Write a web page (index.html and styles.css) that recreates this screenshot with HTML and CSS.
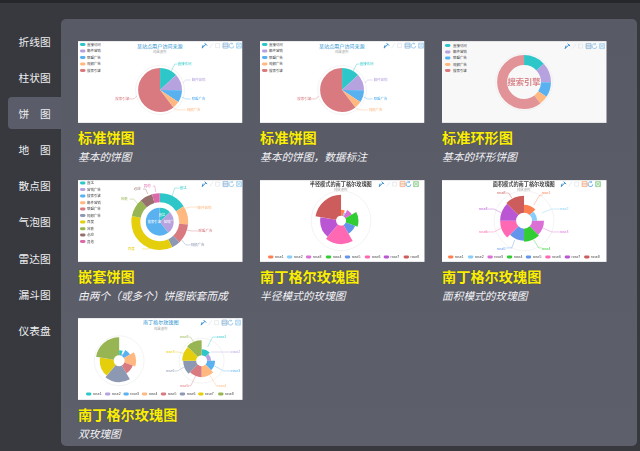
FILE: index.html
```html
<!DOCTYPE html>
<html lang="zh">
<head>
<meta charset="utf-8">
<title>ECharts 图表示例</title>
<link rel="stylesheet" href="styles.css">
</head>
<body>
<svg class="defs" width="0" height="0" aria-hidden="true">
  <defs>
    <symbol id="tools" viewBox="0 0 42 6" overflow="visible">
      <g class="tool">
        <path class="t-a" d="M.5 5.500 4.500 1.500M3 .5l2.500 2.500M.5 5.500l1-3"/>
        <path class="t-f" d="M8 5.500l3.500-5"/>
        <path class="t-f" d="M14 1h4v4h-4z"/>
        <path class="t-b" d="M21.500.5h5v5h-5zM21.500 2.200h5M21.500 3.800h5"/>
        <path class="t-c" d="M31 1a2.400 2.400 0 1 0 1.300 2.200M30.300 0l1 1-1.200.8"/>
        <path class="t-d" d="M35 .5h5v5h-5zM36.200.5v1.800h2.600V.5M36.200 5.500V3.500h2.600v2"/>
      </g>
    </symbol>
    <symbol id="tools-x" viewBox="0 0 42 6" overflow="visible">
      <g class="tool">
        <path class="t-a" d="M.5 5.500 4.500 1.500M3 .5l2.500 2.500M.5 5.500l1-3"/>
        <path class="t-f" d="M8 5.500l3.500-5"/>
        <path class="t-f" d="M14 1h4v4h-4z"/>
        <path class="t-o" d="M21.500.5h5v5h-5zM21.500 2.200h5M21.500 3.800h5"/>
        <path class="t-h" d="M31 1a2.400 2.400 0 1 0 1.300 2.200M30.300 0l1 1-1.200.8"/>
        <path class="t-g" d="M35 .5h5v5h-5zM36.200.5v1.800h2.600V.5M36.200 5.500V3.500h2.600v2"/>
      </g>
    </symbol>
    <symbol id="pie-basic" viewBox="0 0 165 82">
      <rect class="bg" width="165" height="82"/>
      <g class="lg">
        <rect class="f1" x="2" y="2" width="5.500" height="3" rx="1.500"/><text x="9" y="4.700">直接访问</text>
        <rect class="f2" x="2" y="8.500" width="5.500" height="3" rx="1.500"/><text x="9" y="11.200">邮件营销</text>
        <rect class="f3" x="2" y="15" width="5.500" height="3" rx="1.500"/><text x="9" y="17.700">联盟广告</text>
        <rect class="f4" x="2" y="21.500" width="5.500" height="3" rx="1.500"/><text x="9" y="24.200">视频广告</text>
        <rect class="f5" x="2" y="28" width="5.500" height="3" rx="1.500"/><text x="9" y="30.700">搜索引擎</text>
      </g>
      <text class="ttl" x="82" y="6.800">某站点用户访问来源</text>
      <text class="sub" x="82" y="11.500">纯属虚构</text>
      <circle class="halo" cx="82.300" cy="49" r="24.500"/>
      <g transform="translate(82.300 49) rotate(-90)">
        <circle class="s s1" r="11" stroke-width="22" pathLength="360" stroke-dasharray="47 360"/>
        <circle class="s s2" r="11" stroke-width="22" pathLength="360" stroke-dasharray="43.600 360" stroke-dashoffset="-47"/>
        <circle class="s s3" r="11" stroke-width="22" pathLength="360" stroke-dasharray="32.900 360" stroke-dashoffset="-90.600"/>
        <circle class="s s4" r="11" stroke-width="22" pathLength="360" stroke-dasharray="19 360" stroke-dashoffset="-123.500"/>
        <circle class="s s5" r="11" stroke-width="22" pathLength="360" stroke-dasharray="217.500 360" stroke-dashoffset="-142.500"/>
      </g>
      <path class="l1" d="M93 31l4-8h3"/>
      <path class="l2" d="M105 42l3-3h5"/>
      <path class="l3" d="M104 56l4 2h5"/>
      <path class="l4" d="M96 67l3 2h9"/>
      <path class="l5" d="M59 55l-3 3h-5"/>
      <g class="lb">
        <text class="x1" x="100" y="24">直接访问</text>
        <text class="x2" x="114" y="40">邮件营销</text>
        <text class="x3" x="114" y="59">联盟广告</text>
        <text class="x4" x="109" y="70">视频广告</text>
        <text class="x5" x="37.500" y="59.500">搜索引擎</text>
      </g>
      <use href="#tools" x="124" y="1.500" width="42" height="6"/>
    </symbol>
  </defs>
</svg>

<nav class="side">
  <a class="item">折线图</a>
  <a class="item">柱状图</a>
  <a class="item on">饼　图</a>
  <a class="item">地　图</a>
  <a class="item">散点图</a>
  <a class="item">气泡图</a>
  <a class="item">雷达图</a>
  <a class="item">漏斗图</a>
  <a class="item">仪表盘</a>
</nav>

<main class="panel">
  <article class="card">
    <svg class="chart" viewBox="0 0 165 82"><use href="#pie-basic" width="165" height="82"/></svg>
    <h2>标准饼图</h2>
    <p>基本的饼图</p>
  </article>

  <article class="card">
    <svg class="chart" viewBox="0 0 165 82"><use href="#pie-basic" width="165" height="82"/></svg>
    <h2>标准饼图</h2>
    <p>基本的饼图，数据标注</p>
  </article>

  <article class="card">
    <svg class="chart" viewBox="0 0 165 82">
      <rect class="bg-g" width="165" height="82"/>
      <g class="lg">
        <rect class="f1" x="3" y="3" width="5.500" height="3" rx="1.500"/><text x="11" y="5.700">直接访问</text>
        <rect class="f2" x="3" y="9.500" width="5.500" height="3" rx="1.500"/><text x="11" y="12.200">邮件营销</text>
        <rect class="f3" x="3" y="15.500" width="5.500" height="3" rx="1.500"/><text x="11" y="18.200">联盟广告</text>
        <rect class="f4" x="3" y="22" width="5.500" height="3" rx="1.500"/><text x="11" y="24.700">视频广告</text>
        <rect class="f5" x="3" y="28" width="5.500" height="3" rx="1.500"/><text x="11" y="30.700">搜索引擎</text>
      </g>
      <circle class="halo" cx="82.300" cy="41" r="28.500"/>
      <g transform="translate(82.300 41) rotate(-90)">
        <circle class="s s1" r="22" stroke-width="10" pathLength="360" stroke-dasharray="47 360"/>
        <circle class="s s2" r="22" stroke-width="10" pathLength="360" stroke-dasharray="43.600 360" stroke-dashoffset="-47"/>
        <circle class="s s3" r="22" stroke-width="10" pathLength="360" stroke-dasharray="32.900 360" stroke-dashoffset="-90.600"/>
        <circle class="s s4" r="22" stroke-width="10" pathLength="360" stroke-dasharray="19 360" stroke-dashoffset="-123.500"/>
        <circle class="s s5b" r="22" stroke-width="10" pathLength="360" stroke-dasharray="217.500 360" stroke-dashoffset="-142.500"/>
      </g>
      <text class="center" x="82.300" y="44">搜索引擎</text>
      <use href="#tools" x="123" y="2" width="42" height="6"/>
    </svg>
    <h2>标准环形图</h2>
    <p>基本的环形饼图</p>
  </article>

  <article class="card">
    <svg class="chart" viewBox="0 0 165 82">
      <rect class="bg" width="165" height="82"/>
      <g class="lg">
        <rect class="f1" x="2" y="1.300" width="5.500" height="3" rx="1.500"/><text x="9" y="4">直达</text>
        <rect class="f2" x="2" y="7.800" width="5.500" height="3" rx="1.500"/><text x="9" y="10.500">营销广告</text>
        <rect class="f3" x="2" y="14.500" width="5.500" height="3" rx="1.500"/><text x="9" y="17.200">搜索引擎</text>
        <rect class="f4" x="2" y="21.200" width="5.500" height="3" rx="1.500"/><text x="9" y="23.900">邮件营销</text>
        <rect class="f5" x="2" y="27.500" width="5.500" height="3" rx="1.500"/><text x="9" y="30.200">联盟广告</text>
        <rect class="f6" x="2" y="34" width="5.500" height="3" rx="1.500"/><text x="9" y="36.700">视频广告</text>
        <rect class="f7" x="2" y="40.500" width="5.500" height="3" rx="1.500"/><text x="9" y="43.200">百度</text>
        <rect class="f8" x="2" y="47.200" width="5.500" height="3" rx="1.500"/><text x="9" y="49.900">谷歌</text>
        <rect class="f9" x="2" y="53.500" width="5.500" height="3" rx="1.500"/><text x="9" y="56.200">必应</text>
        <rect class="f10" x="2" y="60" width="5.500" height="3" rx="1.500"/><text x="9" y="62.700">其他</text>
      </g>
      <g transform="translate(82 41.700) rotate(-90)">
        <circle class="s s1" r="7" stroke-width="14" pathLength="360" stroke-dasharray="47 360"/>
        <circle class="s s2" r="7" stroke-width="14" pathLength="360" stroke-dasharray="95.500 360" stroke-dashoffset="-47"/>
        <circle class="s s3" r="7" stroke-width="14" pathLength="360" stroke-dasharray="217.500 360" stroke-dashoffset="-142.500"/>
        <circle class="s s1" r="24" stroke-width="9" pathLength="360" stroke-dasharray="57 360"/>
        <circle class="s s4" r="24" stroke-width="9" pathLength="360" stroke-dasharray="39 360" stroke-dashoffset="-57"/>
        <circle class="s s5" r="24" stroke-width="9" pathLength="360" stroke-dasharray="40 360" stroke-dashoffset="-96"/>
        <circle class="s s6" r="24" stroke-width="9" pathLength="360" stroke-dasharray="18 360" stroke-dashoffset="-136"/>
        <circle class="s s7" r="24" stroke-width="9" pathLength="360" stroke-dasharray="128 360" stroke-dashoffset="-154"/>
        <circle class="s s8" r="24" stroke-width="9" pathLength="360" stroke-dasharray="36 360" stroke-dashoffset="-282"/>
        <circle class="s s9" r="24" stroke-width="9" pathLength="360" stroke-dasharray="26 360" stroke-dashoffset="-318"/>
        <circle class="s s10" r="24" stroke-width="9" pathLength="360" stroke-dasharray="16 360" stroke-dashoffset="-344"/>
      </g>
      <g class="in">
        <text x="81" y="36.500">直达</text>
        <text x="86" y="43">营销广告</text>
        <text x="70" y="43">搜索引擎</text>
      </g>
      <path class="l1" d="M94 17l3-9h5"/>
      <path class="l4" d="M108 28l5-1h7"/>
      <path class="l5" d="M109 50l5 1h7"/>
      <path class="l6" d="M104 60l4 5h5"/>
      <path class="l7" d="M74 68l-3 1h-7"/>
      <path class="l8" d="M60 24l-4-5h-4"/>
      <path class="l9" d="M70 14l-2-5h-3"/>
      <path class="l10" d="M78 12l-1-6h-2"/>
      <g class="lb">
        <text class="x1" x="102" y="9">直达</text>
        <text class="x4" x="120" y="28.500">邮件营销</text>
        <text class="x5" x="121" y="52">联盟广告</text>
        <text class="x6" x="113" y="66">视频广告</text>
        <text class="x7" x="50" y="70">百度</text>
        <text class="x8" x="43" y="20">谷歌</text>
        <text class="x9" x="56" y="10">必应</text>
        <text class="x10" x="66" y="7">其他</text>
      </g>
      <use href="#tools" x="124" y="1" width="42" height="6"/>
    </svg>
    <h2>嵌套饼图</h2>
    <p>由两个（或多个）饼图嵌套而成</p>
  </article>

  <article class="card">
    <svg class="chart" viewBox="0 0 165 82">
      <rect class="bg" width="165" height="82"/>
      <text class="ttl-k" x="81" y="5.500">半径模式的南丁格尔玫瑰图</text>
      <text class="sub" x="81" y="11">纯属虚构</text>
      <circle class="halo" cx="81.300" cy="40.700" r="30"/>
      <g transform="translate(81.300 40.700) rotate(-90)">
        <circle class="s k1" r="8" stroke-width="6" pathLength="360" stroke-dasharray="20 360"/>
        <circle class="s k2" r="6.750" stroke-width="3.500" pathLength="360" stroke-dasharray="10 360" stroke-dashoffset="-20"/>
        <circle class="s k3" r="8.750" stroke-width="7.500" pathLength="360" stroke-dasharray="30 360" stroke-dashoffset="-30"/>
        <circle class="s k4" r="11.250" stroke-width="12.500" pathLength="360" stroke-dasharray="50 360" stroke-dashoffset="-60"/>
        <circle class="s k5" r="10" stroke-width="10" pathLength="360" stroke-dasharray="40 360" stroke-dashoffset="-110"/>
        <circle class="s k6" r="14.250" stroke-width="18.500" pathLength="360" stroke-dasharray="70 360" stroke-dashoffset="-150"/>
        <circle class="s k7" r="13" stroke-width="16" pathLength="360" stroke-dasharray="60 360" stroke-dashoffset="-220"/>
        <circle class="s k8" r="15.500" stroke-width="21" pathLength="360" stroke-dasharray="80 360" stroke-dashoffset="-280"/>
      </g>
      <g class="lg">
        <rect class="p1" x="8" y="75.500" width="5.500" height="3" rx="1.500"/><text x="15" y="78.200">rose1</text>
        <rect class="p2" x="27" y="75.500" width="5.500" height="3" rx="1.500"/><text x="34" y="78.200">rose2</text>
        <rect class="p3" x="46" y="75.500" width="5.500" height="3" rx="1.500"/><text x="53" y="78.200">rose3</text>
        <rect class="p4" x="66" y="75.500" width="5.500" height="3" rx="1.500"/><text x="73" y="78.200">rose4</text>
        <rect class="p5" x="85" y="75.500" width="5.500" height="3" rx="1.500"/><text x="92" y="78.200">rose5</text>
        <rect class="p6" x="105" y="75.500" width="5.500" height="3" rx="1.500"/><text x="112" y="78.200">rose6</text>
        <rect class="p7" x="124" y="75.500" width="5.500" height="3" rx="1.500"/><text x="131" y="78.200">rose7</text>
        <rect class="p8" x="144" y="75.500" width="5.500" height="3" rx="1.500"/><text x="151" y="78.200">rose8</text>
      </g>
      <use href="#tools-x" x="119" y="1" width="42" height="6"/>
    </svg>
    <h2>南丁格尔玫瑰图</h2>
    <p>半径模式的玫瑰图</p>
  </article>

  <article class="card">
    <svg class="chart" viewBox="0 0 165 82">
      <rect class="bg" width="165" height="82"/>
      <text class="ttl-k" x="82" y="5.500">面积模式的南丁格尔玫瑰图</text>
      <text class="sub" x="82" y="11">纯属虚构</text>
      <circle class="halo" cx="82.300" cy="40.700" r="30"/>
      <g transform="translate(82.300 40.700) rotate(-90)">
        <circle class="s k1" r="12" stroke-width="8" pathLength="360" stroke-dasharray="45 360"/>
        <circle class="s k2" r="10.500" stroke-width="5" pathLength="360" stroke-dasharray="45 360" stroke-dashoffset="-45"/>
        <circle class="s k3" r="14" stroke-width="12" pathLength="360" stroke-dasharray="45 360" stroke-dashoffset="-90"/>
        <circle class="s k4" r="14.500" stroke-width="13" pathLength="360" stroke-dasharray="45 360" stroke-dashoffset="-135"/>
        <circle class="s k5" r="14" stroke-width="12" pathLength="360" stroke-dasharray="45 360" stroke-dashoffset="-180"/>
        <circle class="s k6" r="16" stroke-width="16" pathLength="360" stroke-dasharray="45 360" stroke-dashoffset="-225"/>
        <circle class="s k7" r="16" stroke-width="16" pathLength="360" stroke-dasharray="45 360" stroke-dashoffset="-270"/>
        <circle class="s k8" r="16.500" stroke-width="17" pathLength="360" stroke-dasharray="45 360" stroke-dashoffset="-315"/>
      </g>
      <path class="n1" d="M92 25l6-10h3"/>
      <path class="n2" d="M100 33l10-4h8"/>
      <path class="n3" d="M101 48l9 4h8"/>
      <path class="n4" d="M92 60l5 8h3"/>
      <path class="n5" d="M73 60l-3 8h-6"/>
      <path class="n6" d="M60 48l-8 4h-8"/>
      <path class="n7" d="M60 33l-8-4h-8"/>
      <path class="n8" d="M70 18l-3-5h-3"/>
      <g class="lb">
        <text class="y1" x="100" y="14">rose1</text>
        <text class="y2" x="118" y="30">rose2</text>
        <text class="y3" x="118" y="53">rose3</text>
        <text class="y4" x="100" y="70">rose4</text>
        <text class="y5" x="55" y="70">rose5</text>
        <text class="y6" x="37" y="53">rose6</text>
        <text class="y7" x="37" y="30">rose7</text>
        <text class="y8" x="55" y="14">rose8</text>
      </g>
      <g class="lg">
        <rect class="p1" x="6" y="75.500" width="5.500" height="3" rx="1.500"/><text x="13" y="78.200">rose1</text>
        <rect class="p2" x="26" y="75.500" width="5.500" height="3" rx="1.500"/><text x="33" y="78.200">rose2</text>
        <rect class="p3" x="45.500" y="75.500" width="5.500" height="3" rx="1.500"/><text x="52.500" y="78.200">rose3</text>
        <rect class="p4" x="65" y="75.500" width="5.500" height="3" rx="1.500"/><text x="72" y="78.200">rose4</text>
        <rect class="p5" x="84" y="75.500" width="5.500" height="3" rx="1.500"/><text x="91" y="78.200">rose5</text>
        <rect class="p6" x="103.500" y="75.500" width="5.500" height="3" rx="1.500"/><text x="110.500" y="78.200">rose6</text>
        <rect class="p7" x="123" y="75.500" width="5.500" height="3" rx="1.500"/><text x="130" y="78.200">rose7</text>
        <rect class="p8" x="142.500" y="75.500" width="5.500" height="3" rx="1.500"/><text x="149.500" y="78.200">rose8</text>
      </g>
      <use href="#tools-x" x="119" y="1" width="42" height="6"/>
    </svg>
    <h2>南丁格尔玫瑰图</h2>
    <p>面积模式的玫瑰图</p>
  </article>

  <article class="card">
    <svg class="chart" viewBox="0 0 165 82">
      <rect class="bg" width="165" height="82"/>
      <text class="ttl" x="83" y="6">南丁格尔玫瑰图</text>
      <text class="sub" x="83" y="11.500">纯属虚构</text>
      <circle class="halo" cx="41.300" cy="42.700" r="25"/>
      <g transform="translate(41.300 42.700) rotate(-90)">
        <circle class="s s1" r="8" stroke-width="5" pathLength="360" stroke-dasharray="20 360"/>
        <circle class="s s2" r="6.500" stroke-width="2" pathLength="360" stroke-dasharray="10 360" stroke-dashoffset="-20"/>
        <circle class="s s3" r="9" stroke-width="7" pathLength="360" stroke-dasharray="30 360" stroke-dashoffset="-30"/>
        <circle class="s s4" r="11.250" stroke-width="11.500" pathLength="360" stroke-dasharray="50 360" stroke-dashoffset="-60"/>
        <circle class="s s5" r="10" stroke-width="9" pathLength="360" stroke-dasharray="40 360" stroke-dashoffset="-110"/>
        <circle class="s s6" r="13.500" stroke-width="16" pathLength="360" stroke-dasharray="70 360" stroke-dashoffset="-150"/>
        <circle class="s s7" r="12.500" stroke-width="14" pathLength="360" stroke-dasharray="60 360" stroke-dashoffset="-220"/>
        <circle class="s s8" r="14.500" stroke-width="18" pathLength="360" stroke-dasharray="80 360" stroke-dashoffset="-280"/>
      </g>
      <circle class="halo" cx="124" cy="42.700" r="22.500"/>
      <g transform="translate(124 42.700) rotate(-90)">
        <circle class="s s1" r="8.500" stroke-width="6" pathLength="360" stroke-dasharray="45 360"/>
        <circle class="s s2" r="7.500" stroke-width="4" pathLength="360" stroke-dasharray="45 360" stroke-dashoffset="-45"/>
        <circle class="s s3" r="9.500" stroke-width="8" pathLength="360" stroke-dasharray="45 360" stroke-dashoffset="-90"/>
        <circle class="s s4" r="11" stroke-width="11" pathLength="360" stroke-dasharray="45 360" stroke-dashoffset="-135"/>
        <circle class="s s5" r="11" stroke-width="11" pathLength="360" stroke-dasharray="45 360" stroke-dashoffset="-180"/>
        <circle class="s s6" r="12" stroke-width="13" pathLength="360" stroke-dasharray="45 360" stroke-dashoffset="-225"/>
        <circle class="s s7" r="12.500" stroke-width="14" pathLength="360" stroke-dasharray="45 360" stroke-dashoffset="-270"/>
        <circle class="s s8" r="13" stroke-width="15" pathLength="360" stroke-dasharray="45 360" stroke-dashoffset="-315"/>
      </g>
      <path class="l1" d="M130 29l5-10h6"/>
      <path class="l2" d="M133 34l13 0h9"/>
      <path class="l3" d="M137 48l9 5h9"/>
      <path class="l4" d="M132 57l7 11h2"/>
      <path class="l5" d="M118 58l-5 10h-3"/>
      <path class="l6" d="M108 48l-8 5h-3"/>
      <path class="l7" d="M108 36l-7-2h-5"/>
      <path class="l8" d="M116 24l-3-5h-2"/>
      <g class="lb">
        <text class="x1" x="140" y="20">rose1</text>
        <text class="x2" x="154" y="35">rose2</text>
        <text class="x3" x="154" y="54">rose3</text>
        <text class="x4" x="140" y="69">rose4</text>
        <text class="x5" x="102" y="69">rose5</text>
        <text class="x6" x="88" y="54">rose6</text>
        <text class="x7" x="88" y="35">rose7</text>
        <text class="x8" x="102" y="20">rose8</text>
      </g>
      <g class="lg">
        <rect class="f1" x="8" y="74.500" width="5.500" height="3" rx="1.500"/><text x="15" y="77.200">rose1</text>
        <rect class="f2" x="27" y="74.500" width="5.500" height="3" rx="1.500"/><text x="34" y="77.200">rose2</text>
        <rect class="f3" x="45.500" y="74.500" width="5.500" height="3" rx="1.500"/><text x="52.500" y="77.200">rose3</text>
        <rect class="f4" x="64" y="74.500" width="5.500" height="3" rx="1.500"/><text x="71" y="77.200">rose4</text>
        <rect class="f5" x="83" y="74.500" width="5.500" height="3" rx="1.500"/><text x="90" y="77.200">rose5</text>
        <rect class="f6" x="102" y="74.500" width="5.500" height="3" rx="1.500"/><text x="109" y="77.200">rose6</text>
        <rect class="f7" x="120.500" y="74.500" width="5.500" height="3" rx="1.500"/><text x="127.500" y="77.200">rose7</text>
        <rect class="f8" x="140.500" y="74.500" width="5.500" height="3" rx="1.500"/><text x="147.500" y="77.200">rose8</text>
      </g>
      <use href="#tools" x="123" y="1.500" width="42" height="6"/>
    </svg>
    <h2>南丁格尔玫瑰图</h2>
    <p>双玫瑰图</p>
  </article>
</main>
</body>
</html>
```

FILE: styles.css
```css
* { box-sizing: border-box; }

html, body { height: 100%; }

body {
  margin: 0;
  height: 451px;
  overflow: hidden;
  display: flex;
  align-items: flex-start;
  background: #37393f;
  border-top: 3px solid #25272b;
  font-family: "Liberation Sans", "Noto Sans CJK SC", sans-serif;
}

.defs { position: absolute; }

.side {
  width: 61px;
  flex: none;
  padding: 22px 0 0 8px;
  display: flex;
  flex-direction: column;
  gap: 4.2px;
}

.item {
  display: flex;
  align-items: center;
  height: 32px;
  padding-left: 10.500px;
  font-size: 10.700px;
  color: #eeeef0;
  border-radius: 4px 0 0 4px;
}

.item.on { background: #5a5c69; }

.panel {
  width: 575.500px;
  height: 427px;
  margin-top: 16px;
  padding: 22px 0 0 17px;
  background: linear-gradient(#585a66, #5d5f6b);
  border-radius: 5px;
  display: grid;
  grid-template-columns: repeat(3, 164.500px);
  column-gap: 17.500px;
  row-gap: 15.600px;
  align-content: start;
}

.card { min-width: 0; }

.chart {
  display: block;
  width: 164.500px;
  height: 82px;
  filter: blur(.4px);
}

.card h2 {
  margin: 5px 0 0;
  font-size: 14.200px;
  line-height: 20px;
  font-weight: bold;
  color: #fbee06;
  text-shadow: 0 0 1px rgba(40, 40, 20, .5);
}

.card p {
  margin: 2px 0 0;
  font-size: 10.700px;
  line-height: 14px;
  font-style: italic;
  color: #f2f2f5;
}

/* chart pieces */
.bg { fill: #fff; }
.bg-g { fill: #f8f8f8; }

.ttl { font-size: 5.100px; fill: #2a93cf; text-anchor: middle; }
.ttl-k { font-size: 5.200px; fill: #444; text-anchor: middle; font-weight: bold; }
.sub { font-size: 3.400px; fill: #aaa; text-anchor: middle; }

.center { font-size: 8.300px; fill: #d9868b; text-anchor: middle; font-weight: bold; }

.lg text { font-size: 3.500px; fill: #444; }
.lb text { font-size: 3.500px; }
.in text { font-size: 3.300px; fill: #fff; }

.halo { fill: none; stroke: #ededed; stroke-width: .7; }
.s { fill: none; }

.s1 { stroke: #2ec7c9; } .s2 { stroke: #b6a2de; } .s3 { stroke: #5ab1ef; }
.s4 { stroke: #ffb980; } .s5 { stroke: #d87a80; } .s5b { stroke: #e19398; }
.s6 { stroke: #8d98b3; } .s7 { stroke: #e5cf0d; } .s8 { stroke: #97b552; }
.s9 { stroke: #95706d; } .s10 { stroke: #dc69aa; }

.f1 { fill: #2ec7c9; } .f2 { fill: #b6a2de; } .f3 { fill: #5ab1ef; }
.f4 { fill: #ffb980; } .f5 { fill: #d87a80; } .f6 { fill: #8d98b3; }
.f7 { fill: #e5cf0d; } .f8 { fill: #97b552; } .f9 { fill: #95706d; }
.f10 { fill: #dc69aa; }

.x1 { fill: #2ec7c9; } .x2 { fill: #b6a2de; } .x3 { fill: #5ab1ef; }
.x4 { fill: #ffb980; } .x5 { fill: #d87a80; } .x6 { fill: #8d98b3; }
.x7 { fill: #e5cf0d; } .x8 { fill: #97b552; } .x9 { fill: #95706d; }
.x10 { fill: #dc69aa; }

.l1, .l2, .l3, .l4, .l5, .l6, .l7, .l8, .l9, .l10,
.n1, .n2, .n3, .n4, .n5, .n6, .n7, .n8 { fill: none; stroke-width: .4; }

.l1 { stroke: #2ec7c9; } .l2 { stroke: #b6a2de; } .l3 { stroke: #5ab1ef; }
.l4 { stroke: #ffb980; } .l5 { stroke: #d87a80; } .l6 { stroke: #8d98b3; }
.l7 { stroke: #e5cf0d; } .l8 { stroke: #97b552; } .l9 { stroke: #95706d; }
.l10 { stroke: #dc69aa; }

.k1 { stroke: #ff7f50; } .k2 { stroke: #87cefa; } .k3 { stroke: #da70d6; }
.k4 { stroke: #32cd32; } .k5 { stroke: #6495ed; } .k6 { stroke: #ff69b4; }
.k7 { stroke: #ba55d3; } .k8 { stroke: #cd5c5c; }

.p1 { fill: #ff7f50; } .p2 { fill: #87cefa; } .p3 { fill: #da70d6; }
.p4 { fill: #32cd32; } .p5 { fill: #6495ed; } .p6 { fill: #ff69b4; }
.p7 { fill: #ba55d3; } .p8 { fill: #cd5c5c; }

.y1 { fill: #ff7f50; } .y2 { fill: #87cefa; } .y3 { fill: #da70d6; }
.y4 { fill: #32cd32; } .y5 { fill: #6495ed; } .y6 { fill: #ff69b4; }
.y7 { fill: #ba55d3; } .y8 { fill: #cd5c5c; }

.n1 { stroke: #ff7f50; } .n2 { stroke: #87cefa; } .n3 { stroke: #da70d6; }
.n4 { stroke: #32cd32; } .n5 { stroke: #6495ed; } .n6 { stroke: #ff69b4; }
.n7 { stroke: #ba55d3; } .n8 { stroke: #cd5c5c; }

/* toolbox icons */
.tool path { fill: none; stroke-width: .7; }
.tool .t-a { stroke: #3c8fd0; stroke-width: 1; }
.t-f { stroke: #dfe4ea; }
.t-b { stroke: #7fabd2; }
.t-c { stroke: #7fbbe8; }
.t-d { stroke: #99cbee; }
.t-o { stroke: #f0a070; }
.t-h { stroke: #3c96e0; }
.t-g { stroke: #80c880; }
```
